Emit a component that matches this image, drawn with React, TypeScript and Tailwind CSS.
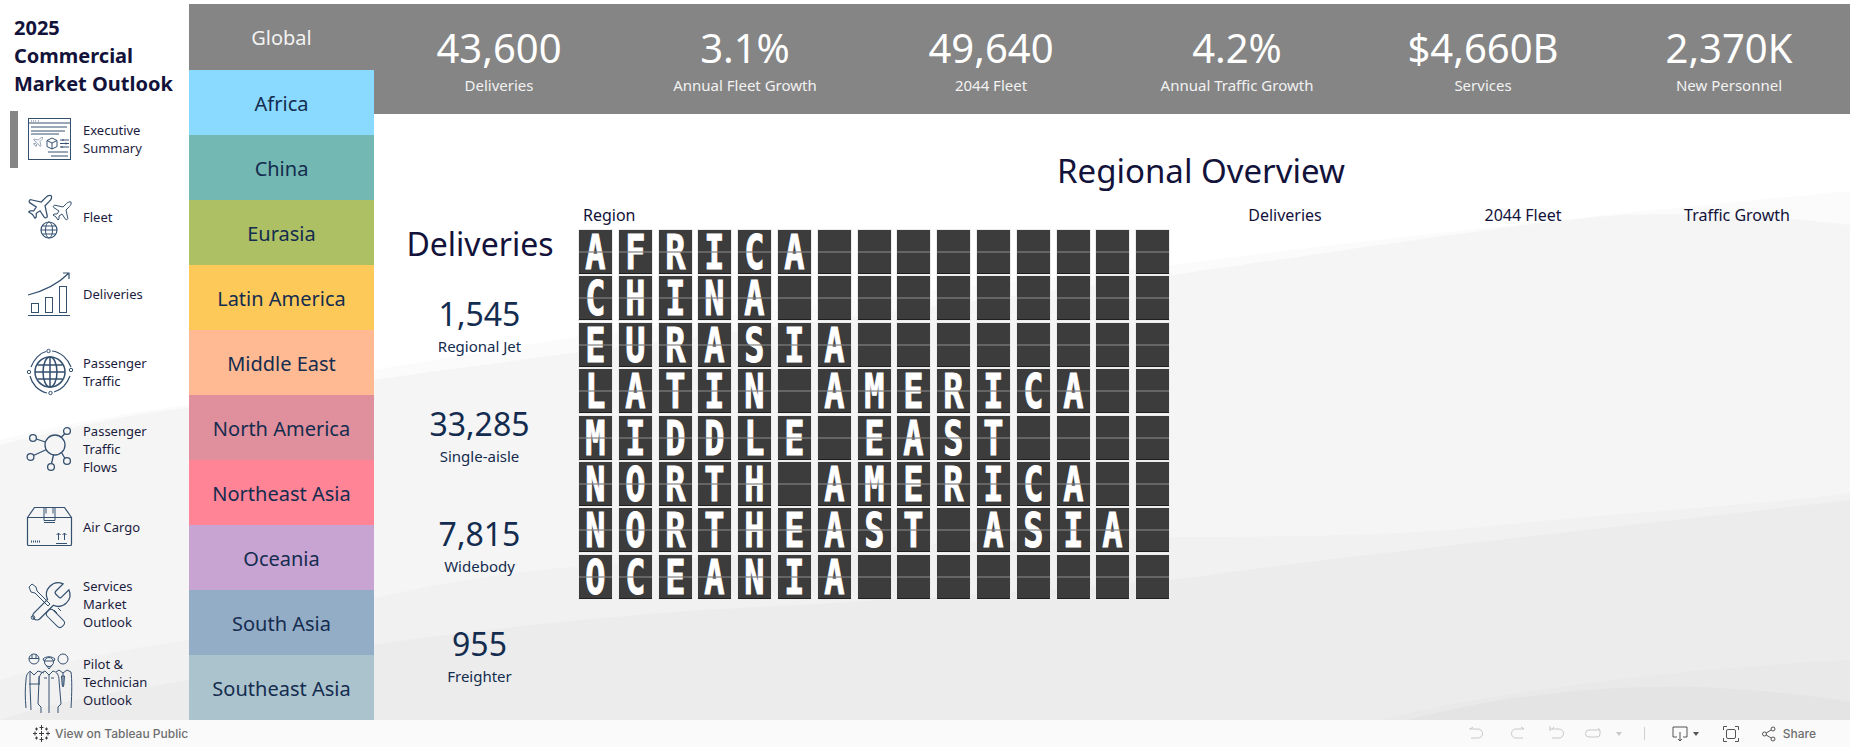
import type { ReactNode } from 'react';

const kpis = [
  { value: '43,600', label: 'Deliveries' },
  { value: '3.1%', label: 'Annual Fleet Growth' },
  { value: '49,640', label: '2044 Fleet' },
  { value: '4.2%', label: 'Annual Traffic Growth' },
  { value: '$4,660B', label: 'Services' },
  { value: '2,370K', label: 'New Personnel' },
];

const regions = [
  { name: 'Africa', color: 'bg-[#8ad9ff]' },
  { name: 'China', color: 'bg-[#73b8b2]' },
  { name: 'Eurasia', color: 'bg-[#adc064]' },
  { name: 'Latin America', color: 'bg-[#fdca5a]' },
  { name: 'Middle East', color: 'bg-[#ffba94]' },
  { name: 'North America', color: 'bg-[#e0909c]' },
  { name: 'Northeast Asia', color: 'bg-[#ff8496]' },
  { name: 'Oceania', color: 'bg-[#c8a4d2]' },
  { name: 'South Asia', color: 'bg-[#94adc6]' },
  { name: 'Southeast Asia', color: 'bg-[#abc3cd]' },
];

const stats = [
  { value: '1,545', label: 'Regional Jet' },
  { value: '33,285', label: 'Single-aisle' },
  { value: '7,815', label: 'Widebody' },
  { value: '955', label: 'Freighter' },
];

const boardRows = ['AFRICA', 'CHINA', 'EURASIA', 'LATIN AMERICA', 'MIDDLE EAST', 'NORTH AMERICA', 'NORTHEAST ASIA', 'OCEANIA'];

const PLANE = 'M17.8 19.2 16 11l3.5-3.5C21 6 21.5 4 21 3c-1-.5-3 0-4.5 1.5L13 8 4.8 6.2c-.5-.1-.9.1-1.1.5l-.3.5c-.2.5-.1 1 .3 1.3L9 12l-2 3H4l-1 1 3 2 2 3 1-1v-3l3-2 3.5 5.3c.3.4.8.5 1.3.3l.5-.2c.4-.3.6-.7.5-1.2z';

function Icon({ h = 48, children }: { h?: number; children: ReactNode }) {
  return (
    <svg width="48" height={h} viewBox={`0 0 48 ${h}`} fill="none" stroke="#34506f" strokeWidth="1" className="shrink-0 overflow-visible">
      {children}
    </svg>
  );
}

const navItems: { label: string; active?: boolean; icon: ReactNode }[] = [
  {
    label: 'Executive Summary',
    active: true,
    icon: (
      <Icon>
        <rect x="3.5" y="3.5" width="42" height="41" />
        <path d="M3.5 8h42M6 6h.8M8 6h.8M10 6h.8M13 6h.8M6 12h36M6 16h34M6 19h28M23 37h20M26 41h17" />
        <path d={PLANE} transform="translate(7 21) scale(.5)" />
        <path d="M22 25.5l5-2.5 5 2.5v6l-5 2.5-5-2.5zM22 25.5l5 2.5 5-2.5M27 28v6" />
        <path d="M35 25h9M35 28.500h9M35 32h9M38 24v2M41 27.500v2M37 31v2" />
      </Icon>
    ),
  },
  {
    label: 'Fleet',
    icon: (
      <Icon>
        <path d={PLANE} transform="translate(0 -1) scale(1.25)" />
        <path d={PLANE} transform="translate(25 6) scale(1)" />
        <circle cx="24" cy="37" r="8" strokeWidth="1.2" />
        <ellipse cx="24" cy="37" rx="3.500" ry="8" />
        <path d="M16 37h16M17 33h14M17 41h14" />
      </Icon>
    ),
  },
  {
    label: 'Deliveries',
    icon: (
      <Icon>
        <path d="M3 25C19 21 33 14 44 3M38 3h6v6" strokeWidth="1.2" />
        <rect x="6.500" y="33.500" width="7" height="9" />
        <rect x="20.500" y="27.500" width="7" height="15" />
        <rect x="34.500" y="16.500" width="7" height="26" />
        <path d="M3 45.500h42" strokeWidth="1.200" />
      </Icon>
    ),
  },
  {
    label: 'Passenger Traffic',
    icon: (
      <Icon>
        <circle cx="25" cy="24" r="15" strokeWidth="1.500" />
        <ellipse cx="25" cy="24" rx="7" ry="15" strokeWidth="1.500" />
        <path d="M25 9v30M10 24h30M12.500 17h25M12.500 31h25" strokeWidth="1.500" />
        <path d="M6 19C9 11 15 5 21 3.500M27 3C36 4 43 11 46 19M45 28C42 36 36 42 29 44M22 45C13 43 7 36 5 28" strokeWidth="1.200" />
        <circle cx="23.500" cy="3" r="1.700" />
        <circle cx="46" cy="22" r="1.700" />
        <circle cx="25.500" cy="45" r="1.700" />
        <circle cx="4" cy="24" r="1.700" />
      </Icon>
    ),
  },
  {
    label: 'Passenger Traffic Flows',
    icon: (
      <Icon>
        <circle cx="30" cy="20" r="10" strokeWidth="1.300" />
        <circle cx="42" cy="6" r="3.400" strokeWidth="1.300" />
        <circle cx="8" cy="13" r="3.400" strokeWidth="1.300" />
        <circle cx="5.500" cy="32" r="3.400" strokeWidth="1.300" />
        <circle cx="42" cy="36" r="3.400" strokeWidth="1.300" />
        <circle cx="26" cy="42" r="3.400" strokeWidth="1.300" />
        <path d="M36 12.500l4-4M11.300 14l9 3M8.500 30.500l13-6M36.500 27.500l3.500 6M28.500 30l-2 8.500" strokeWidth="1.300" />
      </Icon>
    ),
  },
  {
    label: 'Air Cargo',
    icon: (
      <Icon>
        <path d="M2.500 14.500v27a1 1 0 0 0 1 1h42a1 1 0 0 0 1-1v-27zM2.500 14.500l7-10h30l7 10" strokeWidth="1.200" />
        <path d="M19 4.500v13h11v-13M19 14.500h11M19 19.500h11M21 4.500v6M28 4.500v6" />
        <path d="M6 38.500h10" strokeDasharray="1 1" strokeWidth="2" />
        <path d="M33.500 37v-7M31.500 32l2-2 2 2M39.500 37v-7M37.500 32l2-2 2 2M31 40.500h11" />
      </Icon>
    ),
  },
  {
    label: 'Services Market Outlook',
    icon: (
      <Icon>
        <path d="M14.700 6.300a1 1 0 0 0 0 1.400l1.600 1.600a1 1 0 0 0 1.400 0l3.770-3.770a6 6 0 0 1-7.940 7.940l-6.910 6.910a2.120 2.120 0 0 1-3-3l6.910-6.910a6 6 0 0 1 7.940-7.940l-3.760 3.760z" transform="translate(2 -1) scale(1.950)" strokeWidth=".65" />
        <circle cx="8" cy="37.500" r="1.800" />
        <path d="M4 7l3-3 4 3 1 4 13 13-2 2L10 13l-4-1z" />
        <rect x="26" y="28" width="21" height="8.500" rx="3.500" transform="rotate(45 26 28)" />
        <path d="M29 30l3 3M33 28l3 3" />
      </Icon>
    ),
  },
  {
    label: 'Pilot & Technician Outlook',
    icon: (
      <Icon h={60}>
        <circle cx="9" cy="7" r="5" />
        <path d="M4 6.500h10M7 2.500v4M11 2.500v4" />
        <path d="M1 56c-1-10-1-20 0-28 0-6 3-8 4-9l4 4 4-4 6 2M4 32h11M5 20v14l1 24M14 24v8" />
        <circle cx="24" cy="10" r="4.500" />
        <path d="M18 7c3-3 9-3 12 0l-1 2H19zM21 13l3 4 3-4" />
        <path d="M14 28c0-5 3-8 6-9l4 4 4-4c4 1 6 4 6 9l2 24-3 3v6M14 28l-1 24 3 3v6M24 23v38M22 26h-3M29 26h-3" />
        <circle cx="38" cy="7" r="5" />
        <path d="M31 20l3-2 4 3 4-3 4 2c1 7 1 20 0 36M38 21v12M36.500 24h3l-.7 9-.8 2-.8-2z" />
      </Icon>
    ),
  },
];

function Tile({ ch }: { ch: string }) {
  return (
    <div className="relative flex h-[44px] w-[33px] items-center justify-center bg-[#3c3c3c] shadow-[0_0_0_1px_#ececec]">
      <span className="scale-x-[.7] font-['DejaVu_Sans_Mono',monospace] text-[48px] leading-[44px] font-bold text-white [-webkit-text-stroke:1px_white]">{ch}</span>
      <div className="absolute inset-x-0 top-[21px] h-[2px] bg-[#808080]/60" />
      <div className="absolute inset-x-0 bottom-0 h-[1px] bg-[#1f1f1f]" />
    </div>
  );
}

function Board() {
  return (
    <div className="flex flex-col gap-y-[2.4px]">
      {boardRows.map((row) => (
        <div key={row} className="flex gap-x-[6.8px]">
          {Array.from(row.padEnd(15, ' ')).map((ch, i) => (
            <Tile key={i} ch={ch} />
          ))}
        </div>
      ))}
    </div>
  );
}

function Background() {
  return (
    <svg className="absolute inset-0 h-full w-full" viewBox="0 0 1850 747" preserveAspectRatio="none">
      <path d="M0 440C60 425 130 412 189 405C400 360 800 300 1172 265C1400 235 1650 210 1850 191V747H0Z" fill="#fbfbfb" />
      <path d="M0 445C80 425 140 412 189 408C400 372 800 325 1172 275C1350 250 1500 225 1620 215C1720 212 1790 218 1850 225V747H0Z" fill="#f5f5f5" />
      <path d="M0 680C60 662 130 648 189 640C260 622 320 608 380 597C450 580 520 572 560 568C800 548 1000 540 1172 537C1300 537 1420 535 1500 525C1650 510 1760 505 1850 493V747H0Z" fill="#f1f1f1" />
      <path d="M0 720C60 700 130 690 189 680C300 650 500 625 700 610C900 600 1050 590 1172 580C1350 555 1550 535 1850 500V747H0Z" fill="#ececec" />
      <path d="M1380 720C1480 695 1650 670 1850 660V747H1380Z" fill="#e9e9e9" />
      <path d="M1400 722C1500 695 1600 685 1700 687C1760 690 1810 695 1850 702V747H1400Z" fill="#e4e4e4" />
    </svg>
  );
}

function FooterIcon({ w = 16, className = '', children }: { w?: number; className?: string; children: ReactNode }) {
  return (
    <svg width={w} height="16" viewBox={`0 0 ${w} 16`} fill="none" strokeWidth="1" className={className}>
      {children}
    </svg>
  );
}

function Footer() {
  return (
    <footer className="relative flex h-[27px] shrink-0 items-center bg-[#fafafa] pr-[34px] pl-[33px] font-['Inter',sans-serif] text-[12px] font-medium text-[#6e6e6e]">
      <svg width="17" height="17" viewBox="0 0 17 17" stroke="#3a3a3a" strokeWidth="1">
        <path d="M8.500 0v5M6.500 2.500h4M8.500 12v5M6.500 14.500h4M0 8.500h4M2 6.500v4M13 8.500h4M15 6.500v4M3.500 2.500v3M2 4h3M13.500 2.500v3M12 4h3M3.500 11.500v3M2 13h3M13.500 11.500v3M12 13h3M8.500 6v5M6 8.500h5" />
      </svg>
      <span className="ml-[5px]">View on Tableau Public</span>
      <div className="ml-auto flex items-center">
        <FooterIcon>
          <path d="M1 3v-1M1 3h8a4.500 4.500 0 0 1 0 9H2M1 3l3-2" stroke="#c8c8c8" />
        </FooterIcon>
        <FooterIcon className="ml-[24px]">
          <path d="M15 3H7a4.500 4.500 0 0 0 0 9h7M15 3l-3-2" stroke="#c8c8c8" />
        </FooterIcon>
        <FooterIcon className="ml-[24px]">
          <path d="M1 0v5M1 3h9a4.500 4.500 0 0 1 0 9H3M3 3l2-2" stroke="#c8c8c8" />
        </FooterIcon>
        <FooterIcon className="ml-[20px]">
          <path d="M15 4H4a3 3 0 0 0 0 7h8a3 3 0 0 0 3-3V4M15 4l-2-2" stroke="#c8c8c8" />
        </FooterIcon>
        <FooterIcon w={6} className="ml-[15px]">
          <path d="M0 6h6L3 10z" fill="#c8c8c8" />
        </FooterIcon>
        <div className="ml-[22px] h-[13px] w-[1px] bg-[#d0d0d0]" />
        <FooterIcon className="ml-[27px]">
          <path d="M5 11H1V1h14v10h-4M8 6v9M6 13l2 2 2-2" stroke="#555" />
        </FooterIcon>
        <FooterIcon w={6} className="ml-[5px]">
          <path d="M0 6h6L3 10z" fill="#555" />
        </FooterIcon>
        <FooterIcon className="ml-[24px]">
          <path d="M.5 4V.5H4M12 .5h3.500V4M.5 12v3.500H4M12 15.500h3.500V12" stroke="#555" />
          <rect x="3.500" y="3.500" width="9" height="9" rx="1.500" stroke="#555" />
        </FooterIcon>
        <FooterIcon w={14} className="ml-[23px]">
          <circle cx="2.500" cy="8" r="2" stroke="#555" />
          <circle cx="11" cy="3" r="2" stroke="#555" />
          <circle cx="11" cy="13" r="2" stroke="#555" />
          <path d="M4.200 7l5-3M4.200 9l5 3" stroke="#555" />
        </FooterIcon>
        <span className="ml-[7px]">Share</span>
      </div>
    </footer>
  );
}

export default function App() {
  return (
    <div className="relative flex h-[747px] w-[1850px] flex-col overflow-hidden bg-white font-['Noto_Sans',sans-serif]">
      <Background />
      <div className="relative flex h-[720px] shrink-0 pt-[4px]">
        <aside className="-mt-[4px] flex w-[189px] shrink-0 flex-col">
          <h1 className="pt-[14px] pl-[14px] text-[20px] leading-[28px] font-bold text-[#12123a]">
            2025
            <br />
            Commercial
            <br />
            Market Outlook
          </h1>
          <nav className="mt-[2.500px] flex flex-col">
            {navItems.map((item) => (
              <div key={item.label} className="flex h-[77.5px] shrink-0 items-center pl-[10px]">
                <div className={`h-[57px] w-[8px] shrink-0 ${item.active ? 'bg-[#858585]' : ''}`} />
                <div className="ml-[7px] flex items-center">{item.icon}</div>
                <span className="ml-[10px] w-[70px] text-[13px] leading-[18px] text-[#1c1c40]">{item.label}</span>
              </div>
            ))}
          </nav>
        </aside>

        <div className="flex w-[185px] shrink-0 flex-col">
          <div className="flex h-[66px] shrink-0 items-center justify-center bg-[#858585] pt-[2px] text-[20px] text-[#f2f2f2]">Global</div>
          {regions.map((r) => (
            <div key={r.name} className={`flex h-[65px] shrink-0 items-center justify-center pt-[2px] text-[20px] text-[#142c4f] ${r.color}`}>
              {r.name}
            </div>
          ))}
        </div>

        <div className="flex min-w-0 flex-1 flex-col">
          <div className="grid h-[110px] shrink-0 grid-cols-6 bg-[#858585] pt-[20px] text-center text-white">
            {kpis.map((k) => (
              <div key={k.label} className="pl-[4px]">
                <div className="text-[40px] leading-[48px]">{k.value}</div>
                <div className="mt-[3px] text-[15px] leading-[20px] text-[#f2f2f2]">{k.label}</div>
              </div>
            ))}
          </div>

          <h2 className="pt-[37px] pl-[178px] text-center text-[33px] leading-[40px] text-[#12123a]">Regional Overview</h2>

          <div className="mt-[14px] flex">
            <div className="w-[205px] shrink-0 pt-[19px] text-center">
              <div className="pl-[7px] text-[32px] leading-[40px] text-[#12123a]">Deliveries</div>
              <div className="mt-[30px] flex flex-col pl-[6px]">
                {stats.map((s) => (
                  <div key={s.label} className="h-[110px]">
                    <div className="text-[32px] leading-[40px] text-[#142c4f]">{s.value}</div>
                    <div className="mt-[2px] text-[15px] leading-[20px] text-[#142c4f]">{s.label}</div>
                  </div>
                ))}
              </div>
            </div>
            <div className="flex flex-col">
              <div className="mb-[5px] flex h-[20px] text-[16px] leading-[20px] text-[#12123a]">
                <div className="w-[592px] pl-[4px]">Region</div>
                <div className="w-[228px] text-center">Deliveries</div>
                <div className="w-[248px] text-center">2044 Fleet</div>
                <div className="w-[180px] text-center">Traffic Growth</div>
              </div>
              <Board />
            </div>
          </div>
        </div>
      </div>
      <Footer />
    </div>
  );
}
